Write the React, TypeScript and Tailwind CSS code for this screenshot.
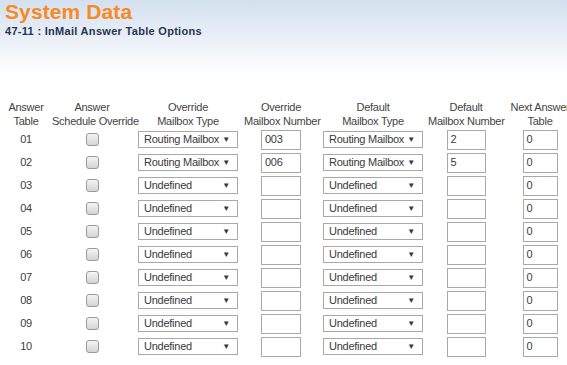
import React from 'react';

type Row = {
  id: string;
  oType: string;
  oNum: string;
  dType: string;
  dNum: string;
  next: string;
};

const rows: Row[] = [
  { id: '01', oType: 'Routing Mailbox', oNum: '003', dType: 'Routing Mailbox', dNum: '2', next: '0' },
  { id: '02', oType: 'Routing Mailbox', oNum: '006', dType: 'Routing Mailbox', dNum: '5', next: '0' },
  ...['03', '04', '05', '06', '07', '08', '09', '10'].map(id => ({
    id,
    oType: 'Undefined',
    oNum: '',
    dType: 'Undefined',
    dNum: '',
    next: '0',
  })),
];

const Select = ({ value }: { value: string }) => (
  <div className="w-[100px] h-[17px] border border-[#a9a9a9] bg-white flex items-center justify-between pl-[5px] pr-[7px] text-[#3a3a3a] whitespace-nowrap">
    <span>{value}</span>
    <span className="text-[8px] leading-none text-[#2e3a4e]">▼</span>
  </div>
);

const Box = ({ value, w }: { value: string; w: string }) => (
  <div className={`${w} h-[20px] border border-[#a9a9a9] bg-white flex items-center pl-[3px] text-[#3a3a3a]`}>
    {value}
  </div>
);

const Check = () => (
  <span className="block w-[13px] h-[13px] rounded-[3px] border border-[#9a9a9a] bg-gradient-to-b from-[#f4f4f4] to-[#d4d4d4]" />
);

const Head = ({ a, b, w }: { a: string; b: string; w: string }) => (
  <div className={`${w} shrink-0 text-center whitespace-nowrap`}>
    <div>{a}</div>
    <div>{b}</div>
  </div>
);

export default function App() {
  return (
    <div
      className="w-[567px] h-[365px] overflow-hidden text-[11px] text-[#3c3c3c]"
      style={{
        fontFamily: '"Liberation Sans", Arial, sans-serif',
        background: 'linear-gradient(to bottom, #d4e0ef 0px, #e8eef7 35px, #f7f9fc 60px, #ffffff 75px)',
      }}
    >
      <div className="pl-[5px]">
        <h1 className="text-[21px] leading-[24px] font-bold text-[#f68a24] tracking-[0.1px]">System Data</h1>
        <h2 className="text-[11px] leading-[14px] font-bold text-[#263650] tracking-[0.3px]">47-11 : InMail Answer Table Options</h2>
      </div>

      <div className="mt-[62px] w-[576px] tracking-[-0.25px]">
        <div className="flex leading-[14px] text-[#444]">
          <Head a="Answer" b="Table" w="w-[52px]" />
          <Head a="Answer" b="Schedule Override" w="w-[80px]" />
          <Head a="Override" b="Mailbox Type" w="w-[112px]" />
          <Head a="Override" b="Mailbox Number" w="w-[74px]" />
          <Head a="Default" b="Mailbox Type" w="w-[110px]" />
          <Head a="Default" b="Mailbox Number" w="w-[76px]" />
          <Head a="Next Answer" b="Table" w="w-[72px]" />
        </div>

        {rows.map(r => (
          <div key={r.id} className="flex h-[23px] items-center">
            <div className="w-[52px] flex justify-center">{r.id}</div>
            <div className="w-[80px] flex justify-center">
              <Check />
            </div>
            <div className="w-[112px] flex justify-center">
              <Select value={r.oType} />
            </div>
            <div className="w-[74px] flex justify-center">
              <Box value={r.oNum} w="w-[40px]" />
            </div>
            <div className="w-[110px] flex justify-center">
              <Select value={r.dType} />
            </div>
            <div className="w-[76px] flex justify-center">
              <Box value={r.dNum} w="w-[39px]" />
            </div>
            <div className="w-[72px] flex justify-center">
              <Box value={r.next} w="w-[35px]" />
            </div>
          </div>
        ))}
      </div>
    </div>
  );
}
